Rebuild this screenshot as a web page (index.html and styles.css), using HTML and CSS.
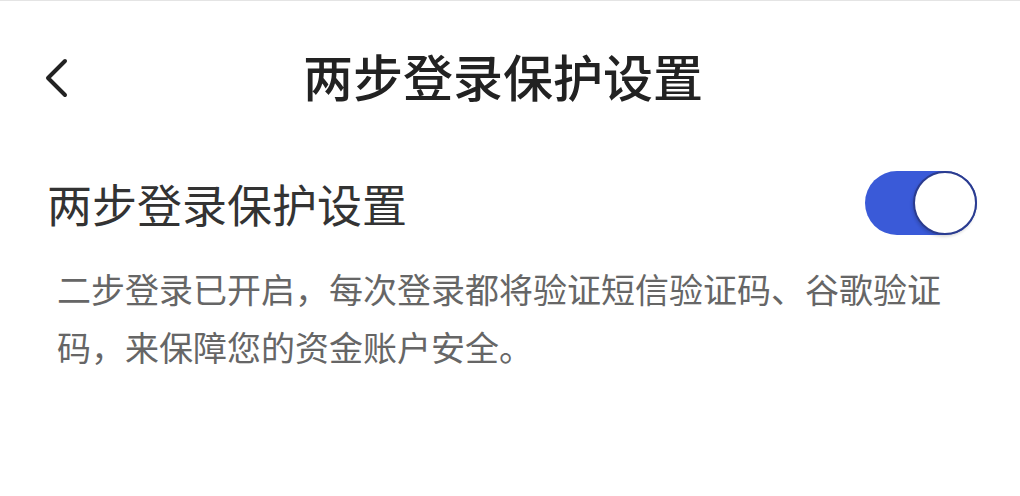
FILE: index.html
```html
<!DOCTYPE html>
<html lang="zh-CN">
<head>
  <meta charset="UTF-8">
  <meta name="viewport" content="width=device-width, initial-scale=1.0">
  <title>两步登录保护设置</title>
  <link rel="stylesheet" href="styles.css">
</head>
<body>

<header class="nav">
  <button class="nav-back" aria-label="返回">
    <svg width="26" height="42" viewBox="0 0 26 42">
      <path d="M21 3 L4 20 L21 37" fill="none" stroke="#222" stroke-width="4" stroke-linecap="round" stroke-linejoin="round"/>
    </svg>
  </button>
  <h1 class="nav-title">两步登录保护设置</h1>
  <span class="nav-side"></span>
</header>

<main class="content">
  <!-- Two-step login switch -->
  <div class="setting-row">
    <span class="setting-label">两步登录保护设置</span>
    <label class="switch">
      <input type="checkbox" checked>
      <span class="switch-track"></span>
    </label>
  </div>

  <p class="setting-desc">二步登录已开启，每次登录都将验证短信验证码、谷歌验证码，来保障您的资金账户安全。</p>
</main>

</body>
</html>
```

FILE: styles.css
```css
body {
  margin: 0;
  background-color: #fff;
  font-family: "Noto Sans CJK SC", "Noto Sans", sans-serif;
  color: #333;
  border-top: 1px solid #e4e4e4;
}

.nav {
  display: grid;
  grid-template-columns: 106px 1fr 120px;
  align-items: center;
  height: 155px;
}

.nav-back {
  justify-self: start;
  margin-left: 44px;
  padding: 0;
  border: none;
  background: none;
  display: flex;
}

.nav-title {
  margin: 0 0 8px;
  text-align: center;
  font-size: 50px;
  font-weight: 500;
  line-height: 60px;
  color: #222;
}

.content {
  padding: 0 43px 0 47px;
}

.setting-row {
  display: flex;
  align-items: center;
  justify-content: space-between;
  margin-top: 14px;
}

.setting-label {
  font-size: 45px;
  line-height: 64px;
  padding-top: 2px;
  color: #333;
}

.switch {
  position: relative;
  display: block;
  width: 112px;
  height: 64px;
}

.switch input {
  display: none;
}

.switch-track {
  display: block;
  width: 100%;
  height: 100%;
  border-radius: 32px;
  background-color: #3a5ad8;
}

/* white knob sitting on the right when checked */
.switch-track::after {
  content: "";
  position: absolute;
  top: 0;
  right: 0;
  width: 64px;
  height: 64px;
  box-sizing: border-box;
  border-radius: 50%;
  background-color: #fff;
  border: 2px solid #2b3c8f;
  box-shadow: -1px 2px 3px rgba(0, 0, 0, 0.15);
}

.setting-desc {
  margin: 24px 17px 0 10px;
  font-size: 34px;
  line-height: 58px;
  color: #666;
}
```
